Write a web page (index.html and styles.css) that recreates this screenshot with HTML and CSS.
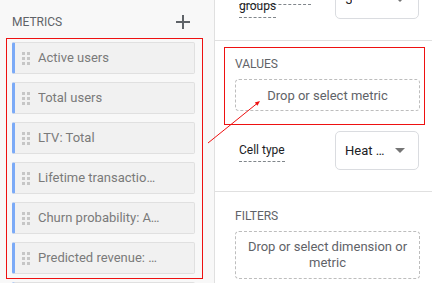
FILE: index.html
```html
<!DOCTYPE html>
<html lang="en">
<head>
<meta charset="utf-8">
<title>Exploration settings</title>
<link rel="stylesheet" href="styles.css">
</head>
<body>
<div class="page">
  <aside class="left">
    <div class="left-head">
      <span class="head-title">METRICS</span>
      <svg class="plus" width="14" height="14" viewBox="0 0 14 14"><path d="M7 0v14M0 7h14" stroke="#5f6368" stroke-width="2" fill="none"/></svg>
    </div>
    <div class="chips">
      <div class="chip"><span class="grip"><i></i><i></i><i></i><i></i><i></i><i></i></span><span class="chip-label">Active users</span></div>
      <div class="chip"><span class="grip"><i></i><i></i><i></i><i></i><i></i><i></i></span><span class="chip-label">Total users</span></div>
      <div class="chip"><span class="grip"><i></i><i></i><i></i><i></i><i></i><i></i></span><span class="chip-label">LTV: Total</span></div>
      <div class="chip"><span class="grip"><i></i><i></i><i></i><i></i><i></i><i></i></span><span class="chip-label">Lifetime transactions: Total</span></div>
      <div class="chip"><span class="grip"><i></i><i></i><i></i><i></i><i></i><i></i></span><span class="chip-label">Churn probability: Average</span></div>
      <div class="chip"><span class="grip"><i></i><i></i><i></i><i></i><i></i><i></i></span><span class="chip-label">Predicted revenue: Average</span></div>
      <div class="chip"><span class="grip"><i></i><i></i><i></i><i></i><i></i><i></i></span><span class="chip-label">LTV: Average</span></div>
    </div>
  </aside>
  <main class="right">
    <section class="sec sec-top">
      <div class="row">
        <div class="row-label"><span class="dotted">Show column groups</span></div>
        <div class="select"><span class="select-text">5</span><span class="caret"></span></div>
      </div>
    </section>
    <section class="sec">
      <div class="sec-label">VALUES</div>
      <div class="drop">Drop or select metric</div>
      <div class="row row-gap">
        <div class="row-label"><span class="dotted">Cell type</span></div>
        <div class="select"><span class="select-text">Heat map</span><span class="caret"></span></div>
      </div>
    </section>
    <section class="sec sec-last">
      <div class="sec-label">FILTERS</div>
      <div class="drop drop-multi">Drop or select dimension or metric</div>
    </section>
  </main>
  <div class="mark mark-metrics"></div>
  <div class="mark mark-values"></div>
  <svg class="arrow" width="432" height="283" viewBox="0 0 432 283">
    <line x1="208" y1="143" x2="257" y2="103.5" stroke="#ee1111" stroke-width="1"/>
    <polygon points="260,101 257.4,105.7 254.8,102.5" fill="#ee1111"/>
  </svg>
</div>
</body>
</html>
```
FILE: styles.css
```css
html, body {
  margin: 0;
  padding: 0;
  width: 432px;
  height: 283px;
  overflow: hidden;
  background: #ffffff;
  font-family: Roboto, "Noto Sans", Arial, sans-serif;
}

.page {
  position: relative;
  display: flex;
  width: 432px;
  height: 283px;
  overflow: hidden;
}

.left {
  width: 215px;
  flex: none;
  box-sizing: border-box;
  padding: 12px 19px 0 12px;
  background: #f8f8f8;
  border-right: 1px solid #e0e0e0;
}

.left-head {
  display: flex;
  align-items: center;
  justify-content: space-between;
  height: 20px;
}

.head-title {
  font-size: 12px;
  line-height: 20px;
  color: #5f6368;
}

.plus {
  display: block;
  margin-right: 5px;
}

.chips {
  display: flex;
  flex-direction: column;
  gap: 8px;
  margin-top: 10px;
}

.chip {
  display: flex;
  align-items: center;
  gap: 8px;
  height: 32px;
  flex: none;
  box-sizing: border-box;
  padding-left: 7px;
  background: #f1f1f1;
  border: 1px solid #e0e0e0;
  border-left: 3px solid #7baaf7;
  border-radius: 2px;
}

.grip {
  display: grid;
  grid-template-columns: 3px 3px;
  grid-auto-rows: 3px;
  column-gap: 2px;
  row-gap: 2px;
  flex: none;
}

.grip i {
  display: block;
  width: 3px;
  height: 3px;
  background: #c6c6c6;
}

.chip-label {
  max-width: 122px;
  white-space: nowrap;
  overflow: hidden;
  text-overflow: ellipsis;
  font-size: 13px;
  line-height: 16px;
  color: #7a7a7a;
}

.right {
  flex: 1;
  min-width: 0;
  background: #ffffff;
}

.sec {
  padding: 15px 12px 21px 20px;
  border-bottom: 1px solid #e0e0e0;
}

.sec-top {
  margin-top: -20px;
  padding-top: 0;
}

.sec-last {
  padding-top: 16px;
  border-bottom: none;
}

.row {
  display: flex;
  align-items: center;
  gap: 10px;
  padding: 0 1px 0 4px;
}

.row-gap {
  margin-top: 20px;
}

.row-label {
  flex: 1;
  min-width: 0;
  font-size: 12px;
  line-height: 13px;
  color: #202124;
}

.dotted {
  padding-bottom: 4px;
  border-bottom: 1px dashed #80868b;
}

.select {
  display: flex;
  align-items: center;
  justify-content: space-between;
  flex: none;
  width: 84px;
  height: 39px;
  box-sizing: border-box;
  padding: 0 13px 0 9px;
  border: 1px solid #dadce0;
  border-radius: 5px;
}

.select-text {
  max-width: 42px;
  white-space: nowrap;
  overflow: hidden;
  text-overflow: ellipsis;
  font-size: 13px;
  color: #202124;
}

.caret {
  width: 0;
  height: 0;
  border-left: 5px solid transparent;
  border-right: 5px solid transparent;
  border-top: 5px solid #757575;
}

.sec-label {
  font-size: 12px;
  line-height: 16px;
  color: #5f6368;
}

.drop {
  display: flex;
  align-items: center;
  justify-content: center;
  margin-top: 7px;
  height: 32px;
  box-sizing: border-box;
  border: 1px dashed #bdbdbd;
  border-radius: 4px;
  font-size: 13px;
  color: #5f6368;
}

.drop-multi {
  height: auto;
  padding: 7px 8px;
  text-align: center;
  line-height: 16px;
}

.mark {
  position: absolute;
  box-sizing: border-box;
  border: 1px solid #ee1111;
  pointer-events: none;
}

.mark-metrics {
  left: 6px;
  top: 38px;
  width: 197px;
  height: 241px;
}

.mark-values {
  left: 224px;
  top: 47px;
  width: 201px;
  height: 78px;
}

.arrow {
  position: absolute;
  left: 0;
  top: 0;
  pointer-events: none;
}
```
